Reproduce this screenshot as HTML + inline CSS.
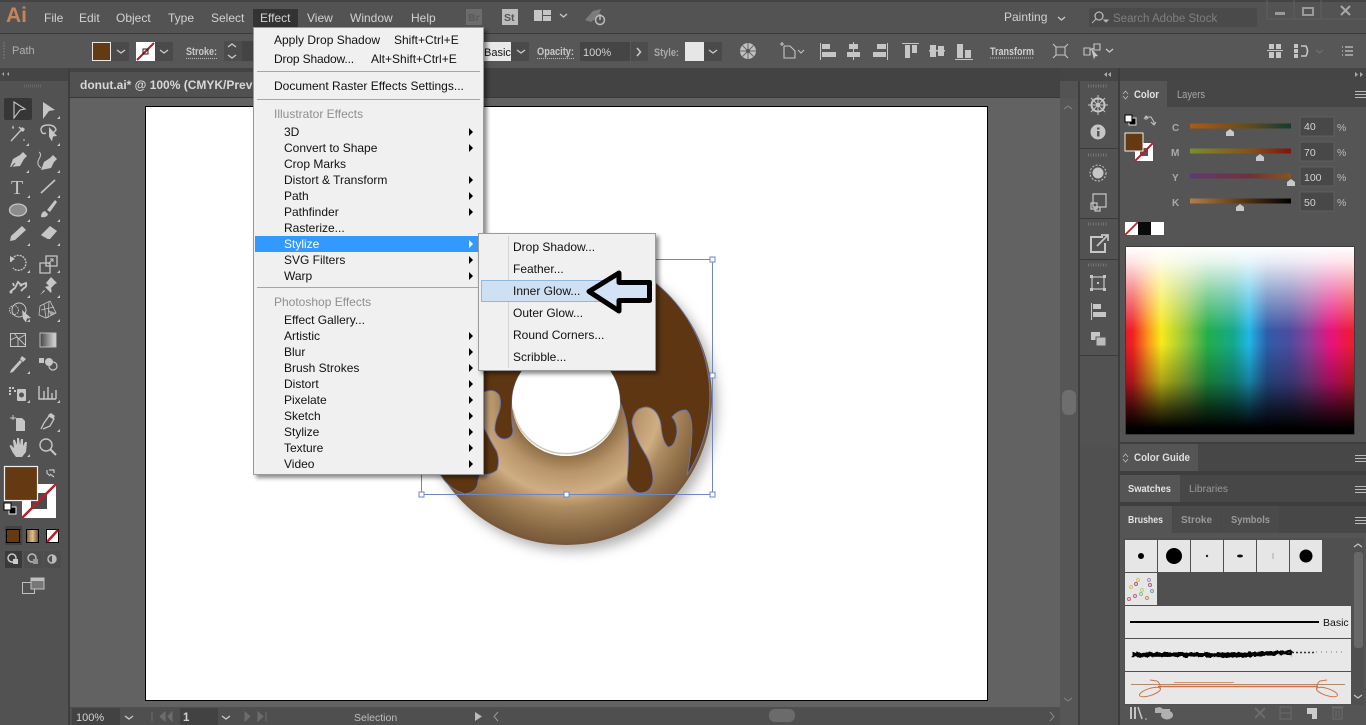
<!DOCTYPE html>
<html lang="en"><head><meta charset="utf-8"><title>donut.ai - Illustrator</title>
<style>
html,body{margin:0;padding:0;width:1366px;height:725px;overflow:hidden;background:#535353}
body{position:relative;font-family:"Liberation Sans",sans-serif}
svg{position:absolute;left:0;top:0}
svg text{font-family:"Liberation Sans",sans-serif;font-size:11.5px;fill:#d2d2d2}
svg .mb text{font-size:12px}
.ic{fill:#c6c6c6;stroke:none}
.is{fill:none;stroke:#c6c6c6}
.is:not([stroke-width]){stroke-width:1.4}
.m{position:absolute;background:#f0f0f0;border:1px solid #9a9a9a;box-shadow:3px 3px 4px rgba(0,0,0,.45);box-sizing:border-box}
.i{position:absolute;font-size:12px;line-height:16px;color:#111;white-space:nowrap}
.g{color:#8f8f8f}
.s{position:absolute;height:1px;background:#a6a6a6}
.a{position:absolute;left:215px;width:0;height:0;border-left:4px solid #000;border-top:4px solid transparent;border-bottom:4px solid transparent}
</style></head><body>
<svg width="1366" height="725" viewBox="0 0 1366 725">
<defs>
<linearGradient id="hue" x1="0" x2="1" y1="0" y2="0">
<stop offset="0" stop-color="#e8182a"/><stop offset=".03" stop-color="#ee2222"/><stop offset=".1" stop-color="#fb9a1c"/><stop offset=".155" stop-color="#f6ea1a"/><stop offset=".27" stop-color="#8fc43e"/><stop offset=".36" stop-color="#23ad4c"/><stop offset=".47" stop-color="#14a88c"/><stop offset=".54" stop-color="#22b6e6"/><stop offset=".62" stop-color="#2f5ca8"/><stop offset=".72" stop-color="#4d4b9f"/><stop offset=".8" stop-color="#8a3f98"/><stop offset=".9" stop-color="#e8127e"/><stop offset="1" stop-color="#ee1c2c"/>
</linearGradient>
<linearGradient id="wb" x1="0" x2="0" y1="0" y2="1">
<stop offset="0" stop-color="#fff"/><stop offset=".08" stop-color="#fff" stop-opacity=".88"/><stop offset=".25" stop-color="#fff" stop-opacity=".45"/><stop offset=".45" stop-color="#fff" stop-opacity="0"/><stop offset=".52" stop-color="#000" stop-opacity="0"/><stop offset=".72" stop-color="#000" stop-opacity=".3"/><stop offset=".86" stop-color="#000" stop-opacity=".72"/><stop offset=".97" stop-color="#000"/>
</linearGradient>
<radialGradient id="don" gradientUnits="userSpaceOnUse" cx="566" cy="399" r="146">
<stop offset="0" stop-color="#8a6a42"/><stop offset=".37" stop-color="#8a6a42"/><stop offset=".5" stop-color="#b8956a"/><stop offset=".65" stop-color="#d0ae83"/><stop offset=".74" stop-color="#ae8c62"/><stop offset=".9" stop-color="#8a6a44"/><stop offset="1" stop-color="#76573a"/>
</radialGradient>
<linearGradient id="gc" x1="0" x2="1"><stop offset="0" stop-color="#b05a10"/><stop offset=".55" stop-color="#6a4c18"/><stop offset="1" stop-color="#123c30"/></linearGradient>
<linearGradient id="gm" x1="0" x2="1"><stop offset="0" stop-color="#7c8c2a"/><stop offset=".6" stop-color="#85501c"/><stop offset="1" stop-color="#7e1410"/></linearGradient>
<linearGradient id="gy" x1="0" x2="1"><stop offset="0" stop-color="#5e3a70"/><stop offset=".6" stop-color="#70323a"/><stop offset="1" stop-color="#8a5418"/></linearGradient>
<linearGradient id="gk" x1="0" x2="1"><stop offset="0" stop-color="#b0804c"/><stop offset=".5" stop-color="#5e3a14"/><stop offset="1" stop-color="#000"/></linearGradient>
<linearGradient id="gt" x1="0" x2="1"><stop offset="0" stop-color="#7a5a34"/><stop offset=".5" stop-color="#e0c090"/><stop offset="1" stop-color="#6a4a28"/></linearGradient>
<linearGradient id="gg" x1="0" x2="1"><stop offset="0" stop-color="#444"/><stop offset="1" stop-color="#ddd"/></linearGradient>
<filter id="sh" x="-20%" y="-20%" width="140%" height="140%"><feDropShadow dx="5" dy="6" stdDeviation="6" flood-color="#000" flood-opacity=".3"/></filter>
<filter id="rough" x="-2%" y="-200%" width="104%" height="500%"><feTurbulence type="fractalNoise" baseFrequency=".25" numOctaves="2" seed="4"/><feDisplacementMap in="SourceGraphic" scale="4" xChannelSelector="R" yChannelSelector="G"/></filter>
</defs>

<!-- chrome base -->
<rect width="1366" height="725" fill="#535353"/>
<rect y="0" width="1366" height="2" fill="#444"/>
<rect y="33" width="1366" height="1" fill="#3b3b3b"/>
<rect y="34" width="1366" height="34" fill="#575757"/>
<rect y="68" width="1366" height="13" fill="#454545"/>
<rect x="70" y="68" width="990" height="29" fill="#434343"/>
<rect x="70" y="72" width="185" height="25" fill="#515151"/>
<rect x="70" y="97" width="990" height="1" fill="#383838"/>
<rect x="70" y="98" width="990" height="609" fill="#626262"/>
<rect x="68" y="68" width="2" height="657" fill="#3e3e3e"/>
<rect x="0" y="81" width="68" height="644" fill="#525252"/>
<rect x="0" y="68" width="68" height="13" fill="#454545"/>
<!-- artboard -->
<rect x="145.500" y="106.500" width="842" height="594" fill="#fff" stroke="#000"/>

<!-- donut -->
<path filter="url(#sh)" fill="url(#don)" fill-rule="evenodd" d="M420 399a146 146 0 1 0 292 0a146 146 0 1 0-292 0ZM512 402a54 54 0 1 1 108 0a54 54 0 1 1-108 0Z"/>
<path fill="#5e3712" stroke="#6b76b2" stroke-width=".9" d="M687 475A146 146 0 1 0 444 480Q452 490 465 494Q478 492 478 481L480 474Q490 476 497 470Q500 462 497 452Q490 440 484 428L484 392Q494 388 499 395Q502 402 499 412Q494 424 495 431Q498 439 505 439Q513 438 513 430Q511 420 512 402A54 54 0 1 1 620 402Q628 420 628.500 440Q629 460 627 480Q632 493 641 493Q652 492 653 480Q653 466 644 452Q634 436 632 422Q634 408 646 407Q658 408 661 425Q662 441 668 447Q675 447 677 432Q677 422 672 417Q678 410 686 410Q692 414 692 432Q691 456 687 475Z"/>
<circle cx="566" cy="402" r="54" fill="#fff"/>
<path d="M513 410A54 54 0 0 0 619 410" fill="none" stroke="#7c5c38" stroke-width="1.500" opacity=".35"/>
<!-- selection -->
<g fill="#fff" stroke="#6f86c0">
<rect x="421.500" y="259.500" width="291" height="235" fill="none"/>
<rect x="710" y="257" width="5" height="5"/><rect x="710" y="373" width="5" height="5"/><rect x="710" y="492" width="5" height="5"/><rect x="564" y="492" width="5" height="5"/><rect x="419" y="492" width="5" height="5"/>
</g>

<!-- scrollbars -->
<rect x="1060" y="98" width="19" height="627" fill="#565656"/>
<rect x="1078" y="81" width="2" height="644" fill="#3e3e3e"/>
<rect x="1062" y="390" width="14" height="25" rx="6" fill="#6e6e6e"/>
<path d="M1064 109l4-3 4 3M1064 698l4 3 4-3" fill="none" stroke="#7c7c7c" stroke-width="1.200"/>

<!-- status bar -->
<rect x="70" y="707" width="990" height="18" fill="#4f4f4f"/>
<rect x="72" y="708" width="48" height="17" fill="#424242"/>
<rect x="180" y="708" width="38" height="17" fill="#424242"/>
<text x="76" y="721" style="font-size:11px">100%</text><text x="183" y="721" font-weight="bold">1</text>
<path class="is" d="M125 716l4 3 4-3M222 716l4 3 4-3"/>
<path d="M152 712v9M165 712l-5 4.500 5 4.500zM172 712l-4 4.500 4 4.500zM245 712l5 4.500-5 4.500zM258 712l5 4.500-5 4.500zM266 712v9" stroke="#6c6c6c" fill="#6c6c6c"/>
<text x="354" y="721" style="font-size:10.500px;fill:#bdbdbd">Selection</text>
<path d="M475 712l7 4.500-7 4.500z" fill="#bbb"/><path d="M498 712l-4 4.500 4 4.500" fill="none" stroke="#999"/>
<rect x="769" y="709" width="26" height="13" rx="6" fill="#6b6b6b"/>
<path d="M1050 712l4 4.500-4 4.500" fill="none" stroke="#888"/>

<!-- Menu bar -->
<text x="6" y="22" style="font-size:21px;font-weight:bold;fill:#c48559">Ai</text>
<rect x="253" y="9" width="45" height="18" fill="#333"/>
<g class="mb"><text x="44" y="22">File</text><text x="79" y="22">Edit</text><text x="116" y="22">Object</text><text x="168" y="22">Type</text><text x="211" y="22">Select</text><text x="260" y="22">Effect</text><text x="307" y="22">View</text><text x="350" y="22">Window</text><text x="411" y="22">Help</text></g>
<rect x="466" y="9" width="16" height="16" fill="#6c6c6c"/><text x="468" y="21" style="fill:#585858;font-weight:bold;font-size:10.500px">Br</text>
<rect x="502" y="9" width="16" height="16" fill="#bcbcbc"/><text x="504" y="21" style="fill:#555;font-weight:bold;font-size:10.500px">St</text>
<path class="ic" d="M534 10h8v11h-8zM543 10h8v5h-8zM543 16h8v5h-8z"/><path class="is" d="M560 14l3.500 3 3.500-3"/>
<path d="M585 20l8-9 8-2-3 8-7 5z" fill="#7c7c7c"/><circle cx="600" cy="20" r="4.500" fill="none" stroke="#bbb" stroke-width="1.500"/><path d="M600 14v6" stroke="#bbb" stroke-width="1.500"/>
<text x="1004" y="21" style="font-size:12px">Painting</text><path class="is" d="M1058 17l3.500 3 3.500-3"/>
<rect x="1089" y="8" width="168" height="19" rx="2" fill="#4a4a4a"/>
<circle cx="1099" cy="16" r="4" fill="none" stroke="#b5b5b5" stroke-width="1.300"/><path d="M1096 19l-4 4M1104 20h4l-2 2z" stroke="#b5b5b5" fill="#b5b5b5"/>
<text x="1113" y="22" style="font-size:11.500px;fill:#7f7f7f">Search Adobe Stock</text>
<path d="M1267 0v19h99M1294 0v19M1321 0v19" fill="none" stroke="#5f5f5f"/>
<rect x="1275" y="12" width="10" height="3" fill="#999"/><rect x="1303" y="8" width="10" height="7" fill="none" stroke="#999" stroke-width="2"/><path d="M1341 6l9 9M1350 6l-9 9" stroke="#a8a8a8" stroke-width="2"/>

<!-- Control bar -->
<path d="M4 42v18" stroke="#6e6e6e" stroke-width="2" stroke-dasharray="1.500 1.500"/>
<text x="12" y="54" style="font-size:11px;fill:#b0b0b0">Path</text>
<rect x="92.500" y="42.500" width="18" height="18" fill="#633a12" stroke="#e8e8e8"/>
<rect x="111" y="42" width="18" height="19" fill="#4a4a4a"/><path class="is" d="M117 50l4 3 4-3"/>
<rect x="136" y="42" width="19" height="19" fill="#fff"/><path d="M137 60l17-17" stroke="#b01e28" stroke-width="2"/><rect x="143" y="49" width="5" height="5" fill="none" stroke="#222"/>
<rect x="155" y="42" width="18" height="19" fill="#4a4a4a"/><path class="is" d="M160 50l4 3 4-3"/>
<text x="186" y="55" textLength="31" lengthAdjust="spacingAndGlyphs" style="font-size:11px;font-weight:bold;fill:#c8c8c8">Stroke:</text><path d="M186 58.500h31" stroke="#bbb" stroke-dasharray="1 1"/>
<rect x="224" y="41" width="18" height="20" fill="#4c4c4c"/><path class="is" d="M228 47l4-3 4 3M228 55l4 3 4-3"/><rect x="242" y="41" width="11" height="20" fill="#444"/>
<rect x="484" y="42" width="27" height="19" fill="#e8e8e8"/><text x="484" y="56" style="font-size:11px;fill:#111">Basic</text>
<rect x="511" y="42" width="18" height="19" fill="#4a4a4a"/><path class="is" d="M517 50l4 3 4-3"/>
<text x="537" y="55" textLength="37" lengthAdjust="spacingAndGlyphs" style="font-size:11px;font-weight:bold;fill:#c8c8c8">Opacity:</text><path d="M537 58.500h37" stroke="#bbb" stroke-dasharray="1 1"/>
<rect x="580" y="42" width="50" height="19" fill="#454545"/><text x="583" y="56" style="font-size:11px">100%</text>
<rect x="631" y="42" width="17" height="19" fill="#4c4c4c"/><path class="is" d="M637 48l3.500 4-3.500 4" stroke-width="1.600"/>
<text x="654" y="56" textLength="25" lengthAdjust="spacingAndGlyphs" style="font-size:11px;font-weight:bold;fill:#aaa">Style:</text>
<rect x="685" y="42" width="19" height="19" fill="#e6e6e6"/><rect x="704" y="42" width="18" height="19" fill="#4a4a4a"/><path class="is" d="M709 50l4 3 4-3"/>
<circle cx="748" cy="51" r="8" fill="#c0c0c0"/><path d="M748 43v16M740 51h16M742.500 45.500l11 11M753.500 45.500l-11 11" stroke="#666" stroke-width="1"/><circle cx="748" cy="51" r="2" fill="#555"/>
<path class="is" d="M780 44h4M782 42v4M784 46h6l5 5v7h-11v-12" stroke-width="1.100"/><path class="is" d="M798 50l3 3 3-3" stroke-width="1"/>
<g class="ic">
<path d="M820 43h1v17h-1zM822 44h8v5h-8zM822 52h14v5h-14z"/>
<path d="M853 42h1v18h-1zM849 44h9v5h-9zM847 52h13v5h-13z"/>
<path d="M887 43h1v17h-1zM877 44h9v5h-9zM873 52h13v5h-13z"/>
<path d="M902 43h17v1h-17zM905 45h5v13h-5zM912 45h5v8h-5z"/>
<path d="M929 50h16v1.500h-16zM930 45h6v12h-6zM938 46h6v10h-6z"/>
<path d="M955 59h18v1h-18zM957 44h6v14h-6zM965 50h6v8h-6z"/>
</g>
<text x="990" y="55" textLength="44" lengthAdjust="spacingAndGlyphs" style="font-size:11px;font-weight:bold;fill:#d0d0d0">Transform</text><path d="M990 58h44" stroke="#bbb" stroke-dasharray="1 1"/>
<path class="is" d="M1056 47h9v8h-9zM1053 44l3 3M1068 44l-3 3M1053 58l3-3M1068 58l-3-3" stroke-width="1.100"/>
<path class="is" d="M1084 48h6v7h-6zM1094 44h6v6h-6zM1090 50l4-2" stroke-width="1.100"/><path d="M1091 48l7 8-3 .5-1 3z" fill="#c6c6c6"/><path class="is" d="M1106 49l3.500 3 3.500-3"/>
<path class="ic" d="M1269 44h5v5h-5zM1276 44h5v5h-5zM1269 52h5v6h-5zM1276 52h5v6h-5zM1267 50h16v1h-16z"/>
<path class="ic" d="M1294 44h4v4h-4zM1294 49h4v4h-4zM1294 54h4v4h-4z"/><path class="is" d="M1301 46h5q3 5 0 10h-5" stroke-width="1.600"/><path d="M1316 50l3.500 3 3.500-3" fill="none" stroke="#6e6e6e" stroke-width="1.300"/>
<path class="is" d="M1343 47h-1M1345 47h8M1343 51h-1M1345 51h8M1343 55h-1M1345 55h8" stroke-width="1.200"/>

<!-- tab -->
<text x="80" y="89" style="font-size:12px;font-weight:bold;fill:#d8d8d8">donut.ai* @ 100% (CMYK/Preview)</text>
<path d="M4 72l-2 2 2 2zM9 72l-2 2 2 2z" fill="#aaa"/>
<path d="M24 86h18" stroke="#666" stroke-width="3" stroke-dasharray="1 1"/>

<!-- tools -->
<rect x="4" y="98" width="28" height="22" rx="2" fill="#363636"/>
<g id="tools">
<path d="M14 102l11 7-5 1-6 8z" fill="none" stroke="#c6c6c6" stroke-width="1.100"/>
<path class="ic" d="M43 102l12 8-6 1-6 8z"/>
<path class="is" d="M11 141l11-12M19 127l3 3"/><path class="ic" d="M22 127l3 2-2 3-3-2zM13 125l1 3-1 1-1-1zM24 139l1 1-1 1-1-1z"/>
<path class="is" d="M41 130q0-5 7-5t8 5l-3 3M41 130q1 5 5 3"/><path class="ic" d="M49 127l8 9-4 .5-1 5-3-5z"/>
<path class="ic" d="M10 167l3-8 7-4 3-3 4 4-3 3-4 7z"/><path d="M10 169l5-6" stroke="#555"/>
<path class="ic" d="M41 170l3-8 6-4 3-3 4 4-3 3-3 6z"/><path class="is" d="M41 168q-5-4-2-9t0-7" stroke-width="1"/>
<text x="11" y="194" style="font-size:20px;font-family:'Liberation Serif',serif;fill:#c6c6c6">T</text>
<path class="is" d="M41 193l14-13" stroke-width="1.600"/>
<ellipse cx="18" cy="210" rx="8.500" ry="6" fill="#8c8c8c" stroke="#c6c6c6" stroke-width="1.300"/>
<path class="ic" d="M41 217q0-5 4-6l3 3q-1 4-7 3zM47 210l8-10 2 2-7 10z"/>
<path class="ic" d="M10 241l1-5 11-10 4 4-11 10z"/>
<path class="ic" d="M41 235l9-9 7 5-7 8h-4z"/><path d="M41 236l6 3" stroke="#555"/>
<path class="is" d="M11 262a7.500 7.500 0 1 1 2 6" stroke-dasharray="2 1"/><path class="ic" d="M10 256l5 3-5 3z"/>
<path class="is" d="M40 263h10v10h-10zM46 256h11v10h-11z" stroke-width="1.300"/><path class="is" d="M48 264l5-5M50 259h3v3" stroke-width="1"/>
<path class="is" d="M11 291l4-3 3-6 3 3 5-2q1 4-2 5l-3 3M13 283l1 3" stroke-width="1.800"/><circle cx="11" cy="292" r="1.500" class="ic"/><circle cx="21" cy="285" r="1.500" class="ic"/>
<path class="ic" d="M46 283l5-6 6 6-2 1-4 4q1 3 0 5l-6-6q2-1 4-1zM40 295l4-5 1 1z"/>
<circle cx="14" cy="310" r="4.500" fill="none" stroke="#c6c6c6" stroke-dasharray="1.500 1"/><circle cx="19" cy="310" r="7" fill="none" stroke="#c6c6c6"/><path class="ic" d="M22 310l9 8-4 .5-1 4-3-4z"/>
<path class="is" d="M40 306l10-5 6 12-10 5-7-3zM44 304l2 14M49 302l-1 16M41 310l13-3" stroke-width=".8"/><path class="ic" d="M48 310l8 3-5 3z" opacity=".7"/>
<rect x="10.500" y="333.500" width="15" height="13" fill="none" stroke="#c6c6c6"/><path class="is" d="M10 340l7-3 8 8M14 333l4 5 0 8M25 335l-7 4" stroke-width=".9"/>
<rect x="40" y="333" width="16" height="14" fill="url(#gg)" stroke="#bbb"/>
<path class="ic" d="M22 356l4 3-3 3-3-3zM20 360l2 2-9 10-3 1 1-3z"/>
<path class="ic" d="M39 358h5v5h-5z"/><circle cx="49" cy="362" r="4" class="ic"/><circle cx="53" cy="366" r="4" fill="none" stroke="#c6c6c6" stroke-width="1.200"/>
<path class="ic" d="M9 387h2v2H9zM12 387h2v2h-2zM9 390h2v2H9zM9 393h2v2H9zM14 390h2v2h-2z"/><rect x="17" y="389" width="9" height="12" rx="1" class="ic"/><circle cx="21.500" cy="395" r="2.500" fill="#555"/>
<path class="is" d="M39 386v13h17M44 399v-8M48 399v-12M52 399v-6M56 399v-9" stroke-width="1.400"/>
<path class="ic" d="M16 418h6l3 3v10h-9z"/><path class="is" d="M13 415v5M10 418h6" stroke-width="1"/>
<path class="is" d="M41 429l3-6 5-7 5 3-4 7-7 3" stroke-width="1.300"/><path class="ic" d="M48 415l3-2 4 3-2 3z"/>
<path class="ic" d="M13 453l-3-6q-1-2 1-2l3 3-1-7q0-2 2-1l2 5v-7h2l1 7 1-6h2l0 7 2-4h2l-1 10-4 5h-6z"/>
<circle cx="46" cy="445" r="6" fill="none" stroke="#c6c6c6" stroke-width="1.400"/><path d="M50.500 449.500l5.500 5.500" stroke="#c6c6c6" stroke-width="2"/>
<path fill="#c6c6c6" d="M60 119l-3 0 3-3zM29 146l-3 0 3-3zM60 146l-3 0 3-3zM29 173l-3 0 3-3zM60 173l-3 0 3-3zM30 198l-3 0 3-3zM60 198l-3 0 3-3zM30 222l-3 0 3-3zM60 222l-3 0 3-3zM30 246l-3 0 3-3zM60 246l-3 0 3-3zM30 273l-3 0 3-3zM60 273l-3 0 3-3zM30 298l-3 0 3-3zM60 298l-3 0 3-3zM30 322l-3 0 3-3zM60 322l-3 0 3-3zM30 374l-3 0 3-3zM30 403l-3 0 3-3zM60 403l-3 0 3-3zM60 432l-3 0 3-3zM30 457l-3 0 3-3z"/>
</g>

<!-- fill/stroke -->
<rect x="22" y="484" width="34" height="34" fill="#fff"/><rect x="31" y="493" width="16" height="16" fill="#4a4a4a"/>
<path d="M22 518l34-34" stroke="#b4202c" stroke-width="2.500"/>
<rect x="4.500" y="466.500" width="33" height="34" fill="#653a13" stroke="#eee" stroke-width="1.200"/>
<path class="is" d="M49 470h5v3M50 474l4 3M50 476l-3-3v-3" stroke-width="1.200"/>
<rect x="9" y="507" width="7" height="7" fill="#000" stroke="#eee"/><rect x="4" y="503" width="7" height="7" fill="#fff" stroke="#000"/>
<rect x="5" y="526" width="17" height="19" fill="#424242"/><rect x="6.500" y="529.500" width="13" height="13" fill="#653a13" stroke="#000"/>
<rect x="26.500" y="529.500" width="12" height="13" fill="url(#gt)" stroke="#000"/>
<rect x="46.500" y="529.500" width="12" height="13" fill="#fff" stroke="#000"/><path d="M47 542l11-12" stroke="#c01a2a" stroke-width="2.500"/>
<rect x="5" y="551" width="17" height="17" fill="#3a3a3a"/><rect x="24" y="551" width="19" height="17" fill="#4d4d4d"/><rect x="44" y="551" width="17" height="17" fill="#4d4d4d"/>
<circle cx="12" cy="558" r="4" fill="none" stroke="#ccc" stroke-width="1.500"/><rect x="13" y="559" width="5" height="5" fill="#ccc"/>
<circle cx="32" cy="558" r="4" fill="none" stroke="#bbb" stroke-width="1.500"/><rect x="33" y="559" width="5" height="5" fill="#999"/>
<circle cx="52" cy="559" r="4" fill="none" stroke="#bbb" stroke-width="1.500"/><path d="M52 555a4 4 0 0 1 0 8z" fill="#bbb"/>
<rect x="22.500" y="582.500" width="12" height="11" fill="none" stroke="#c0c0c0"/><rect x="31" y="578" width="13" height="11" fill="#777" stroke="#c0c0c0"/><rect x="31" y="578" width="13" height="3" fill="#c0c0c0"/>

<!-- right dock -->
<rect x="1080" y="81" width="38" height="366" fill="#525252"/>
<rect x="1118" y="68" width="2" height="657" fill="#3c3c3c"/>
<rect x="1080" y="447" width="38" height="278" fill="#505050"/>
<path d="M1080 148.500h38M1080 218.500h38M1080 259.500h38M1080 355.500h38" stroke="#3a3a3a"/>
<path d="M1088 86h20M1088 155h20M1088 224h20M1088 265h20" stroke="#777" stroke-width="3" stroke-dasharray="1 1.500"/>
<path d="M1107 72l-3 2.500 3 2.500zM1111 72l-3 2.500 3 2.500zM1360 72l3 2.500-3 2.500zM1355 72l3 2.500-3 2.500z" fill="#aaa"/>
<circle cx="1098" cy="105" r="6.500" fill="none" stroke="#c6c6c6" stroke-width="2"/><circle cx="1098" cy="105" r="2" fill="#c6c6c6"/><path d="M1098 95v20M1088 105h20M1091 98l14 14M1105 98l-14 14" stroke="#c6c6c6" stroke-width="1"/>
<circle cx="1098" cy="132" r="7.500" fill="#c6c6c6"/><rect x="1097" y="131" width="2.500" height="5.500" fill="#555"/><rect x="1097" y="127.500" width="2.500" height="2" fill="#555"/>
<circle cx="1098" cy="173" r="5.500" fill="#c6c6c6"/><circle cx="1098" cy="173" r="8" fill="none" stroke="#c6c6c6" stroke-dasharray="2 1.500"/>
<path class="is" d="M1093 194h13v13h-13zM1091 203h6v6h-6zM1095 207h5v4h-5z" stroke-width="1.200"/>
<path class="is" d="M1103 237h-12v15h14v-9" stroke-width="2"/><path class="is" d="M1097 246l10-10M1101 235h7v6" stroke-width="1.700"/>
<path class="is" d="M1092 277h12v12h-12z" stroke-width="1.200"/><path class="ic" d="M1090 275h3v3h-3zM1103 275h3v3h-3zM1090 288h3v3h-3zM1103 288h3v3h-3zM1097 282h2v2h-2z"/>
<path class="ic" d="M1091 303h1v17h-1zM1093 304h8v5h-8zM1093 312h13v5h-13z"/>
<path class="ic" d="M1091 332h9v8h-9z"/><rect x="1096" y="337" width="10" height="9" fill="#bbb" stroke="#555"/>

<!-- panel: color -->
<rect x="1120" y="81" width="246" height="26" fill="#464646"/>
<rect x="1120" y="107" width="246" height="340" fill="#555"/>
<rect x="1120" y="81" width="47" height="26" fill="#555"/>
<path d="M1123 94l2.500-3 2.500 3M1123 96l2.500 3 2.500-3" fill="none" stroke="#bbb" stroke-width=".8"/>
<text x="1134" y="98" textLength="25" lengthAdjust="spacingAndGlyphs" style="font-size:11px;font-weight:bold;fill:#e2e2e2">Color</text><text x="1177" y="98" textLength="28" lengthAdjust="spacingAndGlyphs" style="font-size:11px;fill:#a6a6a6">Layers</text>
<path d="M1355 91.500h11M1355 94.500h11M1355 97.500h11" stroke="#bbb"/>
<rect x="1129" y="118" width="7" height="7" fill="#000" stroke="#ddd"/><rect x="1125" y="115" width="7" height="7" fill="#fff" stroke="#000"/>
<path class="is" d="M1146 120v-3h5l3 5v3M1144 119l2-3 2 3M1151 122l3 3 2-3" stroke-width="1"/>
<rect x="1135" y="143" width="18" height="18" fill="#fff"/><rect x="1140" y="148" width="8" height="8" fill="#555"/><path d="M1135 161l18-18" stroke="#b4202c" stroke-width="2"/>
<rect x="1125" y="133" width="18" height="18" fill="#653a13" stroke="#eee"/>
<text x="1172" y="131" style="font-size:10px;font-weight:bold;fill:#aaa">C</text><text x="1171" y="156" style="font-size:10px;font-weight:bold;fill:#aaa">M</text><text x="1172" y="181" style="font-size:10px;font-weight:bold;fill:#aaa">Y</text><text x="1172" y="206" style="font-size:10px;font-weight:bold;fill:#aaa">K</text>
<rect x="1190" y="123.500" width="101" height="5" fill="url(#gc)"/><rect x="1190" y="148.500" width="101" height="5" fill="url(#gm)"/><rect x="1190" y="173.500" width="101" height="5" fill="url(#gy)"/><rect x="1190" y="198.500" width="101" height="5" fill="url(#gk)"/>
<path fill="#c8c8c8" d="M1226 136v-4l4-3 4 3v4zM1256 161v-4l4-3 4 3v4zM1287 186v-4l4-3 4 3v4zM1236 211v-4l4-3 4 3v4z"/>
<g fill="#484848" stroke="#5e5e5e"><rect x="1300" y="117" width="34" height="19"/><rect x="1300" y="142" width="34" height="19"/><rect x="1300" y="167" width="34" height="19"/><rect x="1300" y="192" width="34" height="19"/></g>
<text x="1304" y="130" style="font-size:10.500px">40</text><text x="1304" y="156" style="font-size:10.500px">70</text><text x="1304" y="181" style="font-size:10.500px">100</text><text x="1304" y="206" style="font-size:10.500px">50</text>
<text x="1337" y="131" style="font-size:10.500px;fill:#bbb">%</text><text x="1337" y="156" style="font-size:10.500px;fill:#bbb">%</text><text x="1337" y="181" style="font-size:10.500px;fill:#bbb">%</text><text x="1337" y="206" style="font-size:10.500px;fill:#bbb">%</text>
<rect x="1125" y="222" width="13" height="13" fill="#fff"/><path d="M1125 235l13-13" stroke="#b4202c" stroke-width="1.800"/><rect x="1138" y="222" width="13" height="13" fill="#0a0a0a"/><rect x="1151" y="222" width="13" height="13" fill="#fff"/>
<rect x="1125.500" y="246.500" width="229" height="188" fill="#222"/>
<rect x="1126" y="247" width="228" height="187" fill="url(#hue)"/><rect x="1126" y="247" width="228" height="187" fill="url(#wb)"/>

<!-- lower panels -->
<rect x="1120" y="442" width="246" height="283" fill="#3e3e3e"/>
<rect x="1120" y="444" width="246" height="27" fill="#474747"/><rect x="1120" y="444" width="78" height="27" fill="#555"/>
<path d="M1123 457l2.500-3 2.500 3M1123 459l2.500 3 2.500-3" fill="none" stroke="#bbb" stroke-width=".8"/>
<text x="1134" y="461" textLength="56" lengthAdjust="spacingAndGlyphs" style="font-size:11px;font-weight:bold;fill:#dedede">Color Guide</text>
<path d="M1355 455.500h11M1355 458.500h11M1355 461.500h11" stroke="#bbb"/>
<rect x="1120" y="475" width="246" height="27" fill="#474747"/><rect x="1120" y="475" width="60" height="27" fill="#555"/>
<text x="1128" y="492" textLength="43" lengthAdjust="spacingAndGlyphs" style="font-size:10.500px;font-weight:bold;fill:#e2e2e2">Swatches</text><text x="1189" y="492" textLength="39" lengthAdjust="spacingAndGlyphs" style="font-size:10.500px;fill:#9a9a9a">Libraries</text>
<path d="M1355 486.500h11M1355 489.500h11M1355 492.500h11" stroke="#bbb"/>
<rect x="1120" y="506" width="246" height="27" fill="#474747"/><rect x="1120" y="506" width="52" height="27" fill="#555"/><rect x="1173" y="506" width="48" height="27" fill="#4a4a4a"/><rect x="1222" y="506" width="57" height="27" fill="#4a4a4a"/>
<text x="1128" y="523" textLength="35" lengthAdjust="spacingAndGlyphs" style="font-size:10.500px;font-weight:bold;fill:#e2e2e2">Brushes</text><text x="1181" y="523" textLength="31" lengthAdjust="spacingAndGlyphs" style="font-size:10.500px;font-weight:bold;fill:#9a9a9a">Stroke</text><text x="1231" y="523" textLength="39" lengthAdjust="spacingAndGlyphs" style="font-size:10.500px;font-weight:bold;fill:#9a9a9a">Symbols</text>
<path d="M1355 517.500h11M1355 520.500h11M1355 523.500h11" stroke="#bbb"/>
<rect x="1120" y="533" width="246" height="192" fill="#555"/>
<rect x="1124" y="538" width="240" height="167" fill="#505050"/>
<g fill="#e6e6e6"><rect x="1125" y="540" width="32" height="32"/><rect x="1158" y="540" width="32" height="32"/><rect x="1191" y="540" width="32" height="32"/><rect x="1224" y="540" width="32" height="32"/><rect x="1257" y="540" width="32" height="32"/><rect x="1290" y="540" width="32" height="32"/><rect x="1125" y="573" width="32" height="32"/></g>
<circle cx="1141" cy="556" r="3" fill="#000"/><circle cx="1174" cy="556" r="8" fill="#000"/><circle cx="1207" cy="556" r="1.200" fill="#222"/><ellipse cx="1240" cy="556" rx="3" ry="1.500" fill="#111"/><path d="M1273 553v6" stroke="#aaa"/><circle cx="1306" cy="556" r="6.500" fill="#000"/>
<g fill="none" stroke-width="1"><circle cx="1138" cy="580" r="1.500" stroke="#d9c060"/><circle cx="1149" cy="580" r="1.500" stroke="#b08ab0"/><circle cx="1131" cy="587" r="1.500" stroke="#d9c060"/><circle cx="1136" cy="584" r="1.500" stroke="#a06080"/><circle cx="1150" cy="585" r="1.500" stroke="#a06080"/><circle cx="1142" cy="590" r="1.500" stroke="#c8d070"/><circle cx="1152" cy="591" r="1.500" stroke="#70a0c0"/><circle cx="1135" cy="596" r="1.500" stroke="#c06080"/><circle cx="1129" cy="599" r="1.500" stroke="#c06080"/><circle cx="1147" cy="598" r="1.500" stroke="#c09060"/><circle cx="1141" cy="594" r="1.500" stroke="#90c080"/></g>
<rect x="1125" y="606" width="226" height="32" fill="#e8e8e8"/><rect x="1125" y="639" width="226" height="32" fill="#e8e8e8"/><rect x="1125" y="672" width="226" height="32" fill="#e8e8e8"/>
<rect x="1130" y="621" width="189" height="2" fill="#000"/><text x="1323" y="626" style="font-size:10.500px;fill:#111">Basic</text>
<path d="M1132 654.500L1240 655L1285 652.500L1292 653" stroke="#000" stroke-width="4.500" fill="none" filter="url(#rough)"/><path d="M1288 652.500h26" stroke="#333" stroke-width="1.500" stroke-dasharray="2 2"/><path d="M1316 652h28" stroke="#777" stroke-dasharray="1 4"/>
<g fill="none" stroke="#cf7448" stroke-width="1"><path d="M1131 684.500h214" stroke="#b08a70"/><path d="M1158 686.500h160" stroke-width="1.600"/><path d="M1174 682.500h60" stroke-width=".7"/><path d="M1150 680l7 1q4 3 3 8M1327 680l-7 1q-4 3-3 8"/><ellipse cx="1150" cy="692" rx="11" ry="3.500" transform="rotate(-18 1150 692)"/><ellipse cx="1327" cy="692" rx="11" ry="3.500" transform="rotate(18 1327 692)"/></g>
<rect x="1352" y="540" width="12" height="165" fill="#505050"/><rect x="1354" y="552" width="9" height="96" rx="3" fill="#686868"/>
<path class="is" d="M1354 547l4-3 4 3M1354 695l4 3 4-3" stroke-width="1.200"/>
<path class="ic" d="M1130 707h2v12h-2zM1134 707h2v12h-2z"/><path class="is" d="M1138 707l4 12" stroke-width="1.500"/><path d="M1145 719h2" stroke="#bbb"/>
<path class="ic" d="M1155 708l5-1 3 2h7v4h-15z" opacity=".8"/><ellipse cx="1167" cy="715" rx="6" ry="4.500" fill="#b0b0b0"/>
<path d="M1255 708l10 10M1265 708l-10 10" stroke="#6c6c6c" stroke-width="2"/>
<rect x="1280" y="707" width="11" height="12" fill="none" stroke="#6c6c6c"/><path d="M1280 713h11" stroke="#6c6c6c"/>
<path d="M1307 708h10v11h-5v-5h-5z" fill="#ccc"/>
<rect x="1333" y="708" width="9" height="11" fill="none" stroke="#6c6c6c"/><path d="M1331 707h13M1336 710v7M1339 710v7" stroke="#6c6c6c"/>
</svg>

<!-- Effect menu -->
<div class="m" style="left:253px;top:27px;width:231px;height:448px">
<div class="i" style="left:20px;top:4px">Apply Drop Shadow</div><div class="i" style="left:140px;top:4px">Shift+Ctrl+E</div>
<div class="i" style="left:20px;top:23px;letter-spacing:-.15px">Drop Shadow...</div><div class="i" style="left:117px;top:23px">Alt+Shift+Ctrl+E</div>
<div class="s" style="left:3px;right:3px;top:43px"></div>
<div class="i" style="left:20px;top:50px">Document Raster Effects Settings...</div>
<div class="s" style="left:3px;right:3px;top:71px"></div>
<div class="i g" style="left:20px;top:78px">Illustrator Effects</div>
<div class="i" style="left:30px;top:96px">3D</div><div class="a" style="top:100px"></div>
<div class="i" style="left:30px;top:112px">Convert to Shape</div><div class="a" style="top:116px"></div>
<div class="i" style="left:30px;top:128px">Crop Marks</div>
<div class="i" style="left:30px;top:144px">Distort &amp; Transform</div><div class="a" style="top:148px"></div>
<div class="i" style="left:30px;top:160px">Path</div><div class="a" style="top:164px"></div>
<div class="i" style="left:30px;top:176px">Pathfinder</div><div class="a" style="top:180px"></div>
<div class="i" style="left:30px;top:192px">Rasterize...</div>
<div style="position:absolute;left:1px;top:208px;width:227px;height:16px;background:#3399ff"></div>
<div class="i" style="left:30px;top:208px;color:#fff">Stylize</div><div class="a" style="top:212px;border-left-color:#fff"></div>
<div class="i" style="left:30px;top:224px">SVG Filters</div><div class="a" style="top:228px"></div>
<div class="i" style="left:30px;top:240px">Warp</div><div class="a" style="top:244px"></div>
<div class="s" style="left:3px;right:3px;top:259px"></div>
<div class="i g" style="left:20px;top:266px">Photoshop Effects</div>
<div class="i" style="left:30px;top:284px">Effect Gallery...</div>
<div class="i" style="left:30px;top:300px">Artistic</div><div class="a" style="top:304px"></div>
<div class="i" style="left:30px;top:316px">Blur</div><div class="a" style="top:320px"></div>
<div class="i" style="left:30px;top:332px">Brush Strokes</div><div class="a" style="top:336px"></div>
<div class="i" style="left:30px;top:348px">Distort</div><div class="a" style="top:352px"></div>
<div class="i" style="left:30px;top:364px">Pixelate</div><div class="a" style="top:368px"></div>
<div class="i" style="left:30px;top:380px">Sketch</div><div class="a" style="top:384px"></div>
<div class="i" style="left:30px;top:396px">Stylize</div><div class="a" style="top:400px"></div>
<div class="i" style="left:30px;top:412px">Texture</div><div class="a" style="top:416px"></div>
<div class="i" style="left:30px;top:428px">Video</div><div class="a" style="top:432px"></div>
</div>
<!-- Stylize submenu -->
<div class="m" style="left:478px;top:233px;width:178px;height:138px">
<div style="position:absolute;left:29px;top:2px;bottom:2px;width:1px;background:#d4d4d4"></div>
<div style="position:absolute;left:2px;top:46px;width:171px;height:22px;background:#cfe0f3;border:1px solid #8fb8de;box-sizing:border-box"></div>
<div class="i" style="left:34px;top:5px">Drop Shadow...</div>
<div class="i" style="left:34px;top:27px">Feather...</div>
<div class="i" style="left:34px;top:49px">Inner Glow...</div>
<div class="i" style="left:34px;top:71px">Outer Glow...</div>
<div class="i" style="left:34px;top:93px">Round Corners...</div>
<div class="i" style="left:34px;top:115px">Scribble...</div>
</div>
<svg width="1366" height="725" viewBox="0 0 1366 725" style="pointer-events:none">
<path d="M589 291.500L619 273V282.500H649.500V300.500H619V311Z" fill="#d3e3f5" stroke="#000" stroke-width="5" stroke-linejoin="round"/>
</svg>
</body></html>
